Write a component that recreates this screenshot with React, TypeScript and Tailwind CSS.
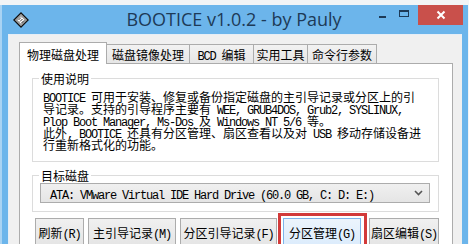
import React from "react";

const isAscii = (s: string) => /^[\x00-\x7F]+$/.test(s);

function Mixed({ text }: { text: string }) {
  const parts = text.split(/([\x00-\x7F]+)/).filter((p) => p.length > 0);
  return (
    <>
      {parts.map((p, i) =>
        isAscii(p) ? (
          <span
            key={i}
            className="font-['Liberation_Mono',monospace] text-[12px] leading-[12px] tracking-[-1.2px] whitespace-pre"
          >
            {p}
          </span>
        ) : (
          <span
            key={i}
            className="font-['Noto_Sans_CJK_SC',sans-serif] text-[12px] leading-[12px] whitespace-pre"
          >
            {p}
          </span>
        )
      )}
    </>
  );
}

function Line({ text }: { text: string }) {
  return (
    <div className="h-[12px] leading-[12px] whitespace-nowrap">
      <Mixed text={text} />
    </div>
  );
}

function AppIcon() {
  return (
    <svg width="16" height="16" viewBox="0 0 16 16">
      <path d="M8 1 L15 8 L8 15 L1 8 Z" fill="#d8d8d8" stroke="#111" strokeWidth="1.4" />
      <path d="M8 3.5 L12.5 8 L8 12.5 L3.5 8 Z" fill="#fff" stroke="#333" strokeWidth="0.8" />
      <path d="M5.5 8 L8 5.5 M7 9.5 L9.5 7 M8.5 11 L11 8.5" stroke="#222" strokeWidth="0.9" />
    </svg>
  );
}

function Tab({ label, w, active }: { label: string; w: string; active?: boolean }) {
  if (active) {
    return (
      <div
        className={`${w} h-[22px] bg-white border border-b-0 border-[#acacac] flex items-center justify-center relative z-10 -mb-px pt-[1px]`}
      >
        <div className="h-[12px] leading-[12px] whitespace-nowrap">
          <Mixed text={label} />
        </div>
      </div>
    );
  }
  return (
    <div
      className={`${w} h-[19px] bg-gradient-to-b from-[#f2f2f2] to-[#e6e6e6] border border-b-0 border-l-0 border-[#acacac] flex items-center justify-center`}
    >
      <div className="h-[12px] leading-[12px] whitespace-nowrap">
        <Mixed text={label} />
      </div>
    </div>
  );
}

function Btn({ label, w, focus }: { label: string; w: string; focus?: boolean }) {
  return (
    <div
      className={`${w} h-[28px] border ${
        focus
          ? "border-[#7eb4ea] bg-gradient-to-b from-[#ecf4fc] to-[#dcecfc]"
          : "border-[#acacac] bg-gradient-to-b from-[#f0f0f0] to-[#e5e5e5]"
      } flex items-center justify-center shrink-0`}
    >
      <div className="h-[12px] leading-[12px] whitespace-nowrap">
        <Mixed text={label} />
      </div>
    </div>
  );
}

export default function App() {
  return (
    <div className="w-[469px] h-[244px] overflow-hidden bg-[#f2f4f6] pt-[5px] pr-[1px] text-black">
      <div className="h-[260px] bg-[#6cb5eb] border-l-[2px] border-[#a9d3f3] flex flex-col">
        {/* Title bar */}
        <div className="h-[29px] shrink-0 grid grid-cols-[95px_1fr_97px] items-start">
          <div className="pl-[11px] pt-[7px]">
            <AppIcon />
          </div>
          <div className="h-[29px] flex items-center justify-center font-['Open_Sans',sans-serif] text-[18px] text-[#1d3a57] whitespace-nowrap">
            BOOTICE v1.0.2 - by Pauly
          </div>
          <div className="flex items-start h-[20px] pr-[5px]">
            <div className="w-[23px] h-[20px] flex items-center justify-center">
              <div className="w-[7px] h-[2px] bg-[#1d3a57] mt-[3px]" />
            </div>
            <div className="w-[20px] h-[20px] flex items-center justify-center">
              <div className="w-[10px] h-[7px] border border-t-2 border-[#1d3a57] -mt-[4px]" />
            </div>
            <div className="w-[45px] h-[20px] bg-[#c9504b] flex items-center justify-center ml-[4px]">
              <svg width="10" height="10" viewBox="0 0 10 10">
                <path d="M1.5 1.5 L8.5 8.5 M8.5 1.5 L1.5 8.5" stroke="#fff" strokeWidth="2" />
              </svg>
            </div>
          </div>
        </div>
        {/* Client area */}
        <div className="flex-1 ml-[6px] mr-[6px] bg-[#f0f0f0] border-l border-t border-[#e6eef6] pl-[10px] pr-[9px] pt-[7px]">
          {/* Tabs */}
          <div className="flex items-end">
            <Tab label="物理磁盘处理" w="w-[88px]" active />
            <Tab label="磁盘镜像处理" w="w-[83px]" />
            <Tab label="BCD 编辑" w="w-[64px]" />
            <Tab label="实用工具" w="w-[54px]" />
            <Tab label="命令行参数" w="w-[69px]" />
          </div>
          {/* Panel */}
          <div className="bg-white border border-[#acacac] pl-[12px] pr-[13px] pt-[8px] h-[200px]">
            <fieldset className="border border-[#dcdcdc] m-0 p-0 min-w-0">
              <legend className="ml-[6px] px-[2px] h-[12px] leading-[12px] whitespace-nowrap">
                <Mixed text="使用说明" />
              </legend>
              <div className="pl-[10px] pt-[6px] pb-[11px]">
                <Line text="BOOTICE 可用于安装、修复或备份指定磁盘的主引导记录或分区上的引" />
                <Line text="导记录。支持的引导程序主要有 WEE, GRUB4DOS, Grub2, SYSLINUX," />
                <Line text="Plop Boot Manager, Ms-Dos 及 Windows NT 5/6 等。" />
                <Line text="此外, BOOTICE 还具有分区管理、扇区查看以及对 USB 移动存储设备进" />
                <Line text="行重新格式化的功能。" />
              </div>
            </fieldset>
            <fieldset className="border border-[#dcdcdc] m-0 p-0 min-w-0 mt-[7px]">
              <legend className="ml-[6px] px-[2px] h-[12px] leading-[12px] whitespace-nowrap">
                <Mixed text="目标磁盘" />
              </legend>
              <div className="pl-[7px] pr-[8px] pt-[2px] pb-[8px]">
                <div className="h-[20px] border border-[#acacac] bg-gradient-to-b from-[#f0f0f0] to-[#e5e5e5] flex items-center pl-[9px] pr-[6px]">
                  <div className="flex-1 h-[12px] leading-[12px] whitespace-nowrap">
                    <Mixed text="ATA: VMware Virtual IDE Hard Drive (60.0 GB, C: D: E:)" />
                  </div>
                  <svg width="9" height="6" viewBox="0 0 9 6">
                    <path d="M1 1 L4.5 4.5 L8 1" stroke="#555" strokeWidth="1.6" fill="none" />
                  </svg>
                </div>
              </div>
            </fieldset>
            <div className="flex items-start ml-[3px] mt-[1px]">
              <div className="mt-[5px]">
                <Btn label="刷新(R)" w="w-[49px]" />
              </div>
              <div className="mt-[5px] ml-[4px]">
                <Btn label="主引导记录(M)" w="w-[88px]" />
              </div>
              <div className="mt-[5px] ml-[4px]">
                <Btn label="分区引导记录(F)" w="w-[97px]" />
              </div>
              <div className="ml-[1px] border-[3px] border-[#d23a3a] p-[2px] pr-[3px]">
                <Btn label="分区管理(G)" w="w-[78px]" focus />
              </div>
              <div className="mt-[5px] ml-[2px]">
                <Btn label="扇区编辑(S)" w="w-[70px]" />
              </div>
            </div>
          </div>
        </div>
      </div>
    </div>
  );
}
